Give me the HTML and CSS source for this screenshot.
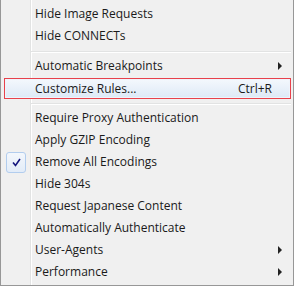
FILE: index.html
```html
<!DOCTYPE html>
<html lang="en">
    <head>
        <meta charset="UTF-8" />
        <link rel="stylesheet" href="styles.css">
        <title>Rules menu</title>
    </head>
    <body>
        <ul class="menu">
            <li class="item"><span class="label">Hide Image Requests</span></li>
            <li class="item"><span class="label">Hide CONNECTs</span></li>
            <li class="sep"></li>
            <li class="item">
                <span class="label">Automatic Breakpoints</span>
                <span class="arrow"></span>
            </li>
            <li class="item active">
                <span class="label">Customize Rules...</span>
                <span class="shortcut">Ctrl+R</span>
            </li>
            <li class="sep"></li>
            <li class="item"><span class="label">Require Proxy Authentication</span></li>
            <li class="item"><span class="label">Apply GZIP Encoding</span></li>
            <li class="item checked">
                <span class="check">
                    <svg width="9" height="9" viewBox="0 0 9 9">
                        <path d="M1 4.5 L3.5 7.5 L8 1" fill="none" stroke="#14167e" stroke-width="1.6" />
                    </svg>
                </span>
                <span class="label">Remove All Encodings</span>
            </li>
            <li class="item"><span class="label">Hide 304s</span></li>
            <li class="item"><span class="label">Request Japanese Content</span></li>
            <li class="item"><span class="label">Automatically Authenticate</span></li>
            <li class="item">
                <span class="label">User-Agents</span>
                <span class="arrow"></span>
            </li>
            <li class="item">
                <span class="label">Performance</span>
                <span class="arrow"></span>
            </li>
        </ul>
    </body>
</html>
```

FILE: styles.css
```css
body {
    margin: 0;
}

.menu {
    list-style: none;
    margin: 0;
    padding: 3px 0 2px;
    width: 294px;
    height: 286px;
    box-sizing: border-box;
    border: 1px solid #979797;
    border-top: none;
    background: linear-gradient(
            to right,
            transparent 29px,
            #e2e3e3 29px,
            #e2e3e3 30px,
            #ffffff 30px,
            #ffffff 31px,
            transparent 31px
        ),
        #f0f0f0;
    font-family: "Open Sans", sans-serif;
    font-size: 12px;
    color: #1a1a1a;
}

.item {
    display: flex;
    align-items: center;
    height: 22px;
    line-height: 22px;
    padding: 0 11px 0 34px;
    box-sizing: border-box;
}

.label {
    flex: 1;
    white-space: nowrap;
}

.shortcut {
    margin-right: 10px;
}

.arrow {
    width: 0;
    height: 0;
    border-left: 4px solid #222;
    border-top: 4px solid transparent;
    border-bottom: 4px solid transparent;
}

.item.active {
    height: 21px;
    line-height: 19px;
    margin: 1px 2px 0 3px;
    padding: 0 8px 0 30px;
    border: 1px solid #e8414b;
    background: linear-gradient(#f4f8fd, #dde9f6);
    box-shadow: inset 0 0 0 1px #eef4fb;
}

.item.checked {
    padding-left: 5px;
}

.check {
    display: flex;
    align-items: center;
    justify-content: center;
    width: 20px;
    height: 21px;
    margin-right: 9px;
    box-sizing: border-box;
    border: 1px solid #b2cdee;
    border-radius: 3px;
    background: linear-gradient(#f3f7fc, #e2ecf8);
}

.sep {
    height: 8px;
    margin-left: 30px;
    margin-right: 2px;
    background: linear-gradient(
        transparent 4px,
        #e2e3e3 4px,
        #e2e3e3 5px,
        #ffffff 5px,
        #ffffff 6px,
        transparent 6px
    );
}
```
